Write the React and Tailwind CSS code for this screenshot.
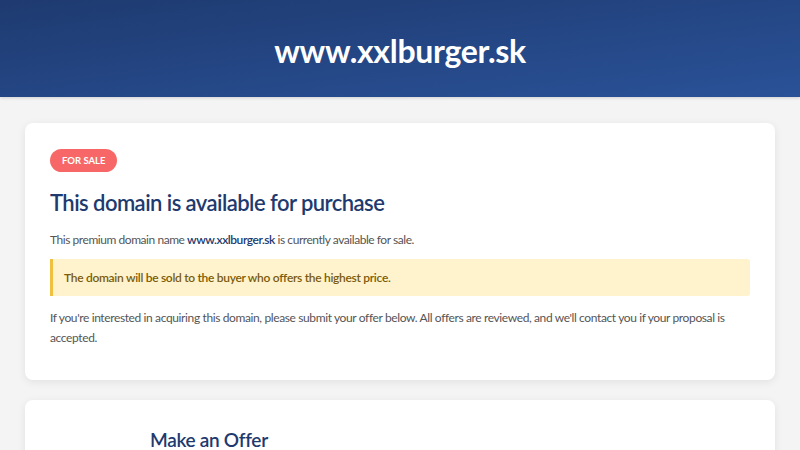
export default function App() {
  const font = { fontFamily: 'Lato, "Open Sans", sans-serif' }
  return (
    <div className="min-h-screen bg-[#f4f4f4] text-[#333]" style={font}>
      <header className="h-[97px] flex items-center justify-center pt-[5px] bg-gradient-to-br from-[#1e3a70] to-[#2a5298] shadow-[0_1px_3px_rgba(0,0,0,0.15)]">
        <h1 className="text-[32px] font-bold text-white tracking-[-0.3px]">www.xxlburger.sk</h1>
      </header>

      <main className="max-w-[750px] mx-auto pt-[26px]">
        <section className="bg-white rounded-lg shadow-[0_2px_8px_rgba(0,0,0,0.08)] px-[25px] pt-[26px] pb-[33px] mb-[20px]">
          <div className="flex">
            <span className="bg-[#f76767] text-white text-[9.5px] font-bold uppercase rounded-full px-[12px] py-[4px] leading-[15px]">For Sale</span>
          </div>
          <h2 className="mt-[15px] text-[22px] font-semibold text-[#1e3a6e] leading-[32px] tracking-[-0.55px]">This domain is available for purchase</h2>
          <p className="mt-[11px] text-[12px] text-[#555] leading-[20px] tracking-[-0.45px]">
            This premium domain name <strong className="font-semibold text-[#1e3a6e]">www.xxlburger.sk</strong> is currently available for sale.
          </p>
          <div className="mt-[9px] bg-[#fff3cd] border-l-[3px] border-[#f0c040] rounded-r-[3px] px-[11px] py-[9px] text-[12px] font-semibold text-[#7a5c0c] leading-[19px] tracking-[-0.3px]">
            The domain will be sold to the buyer who offers the highest price.
          </div>
          <p className="mt-[12px] text-[12px] text-[#555] leading-[19.5px] tracking-[-0.38px]">
            If you're interested in acquiring this domain, please submit your offer below. All offers are reviewed, and we'll contact you if your proposal is accepted.
          </p>
        </section>

        <section className="bg-white rounded-lg shadow-[0_2px_8px_rgba(0,0,0,0.08)] px-[25px] pt-[27px] pb-[28px]">
          <div className="max-w-[500px] mx-auto">
            <h2 className="text-[19px] font-semibold text-[#1e3a6e] leading-[26px] tracking-[-0.3px]">Make an Offer</h2>
          </div>
        </section>
      </main>
    </div>
  )
}
